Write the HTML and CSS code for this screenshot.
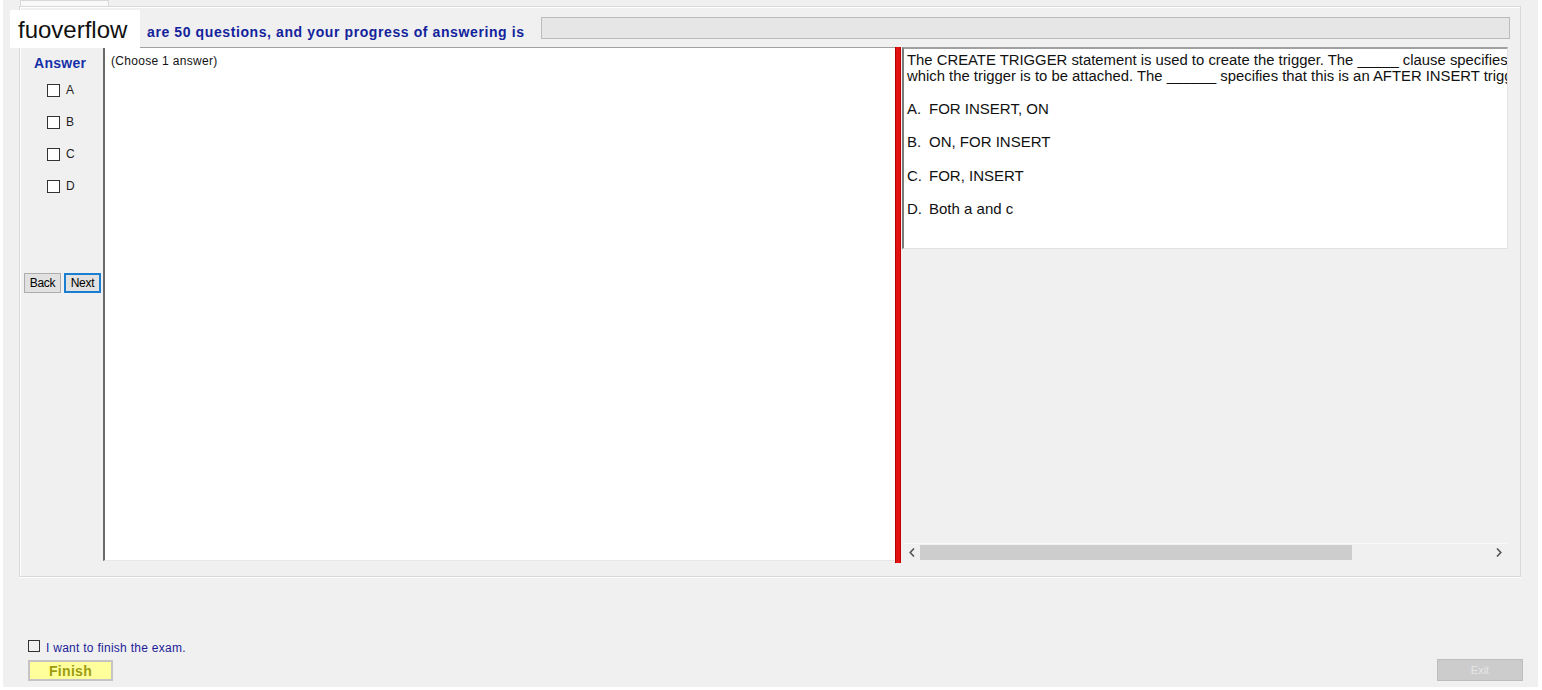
FILE: index.html
```html
<!DOCTYPE html>
<html>
<head>
<meta charset="utf-8">
<link rel="stylesheet" href="styles.css">
</head>
<body>
<div class="window">
  <div class="tabstrip"><div class="tab"></div></div>
  <div class="tabpage">
    <div class="header">
      <span class="header-text">are 50 questions, and your progress of answering is</span>
      <div class="progress"></div>
    </div>
    <div class="main">
      <div class="left">
        <div class="answer-title">Answer</div>
        <div class="choices">
          <div class="choice"><span class="box"></span><span class="lbl">A</span></div>
          <div class="choice"><span class="box"></span><span class="lbl">B</span></div>
          <div class="choice"><span class="box"></span><span class="lbl">C</span></div>
          <div class="choice"><span class="box"></span><span class="lbl">D</span></div>
        </div>
        <div class="nav">
          <button class="btn">Back</button>
          <button class="btn btn-focus">Next</button>
        </div>
      </div>
      <div class="middle">
        <div class="hint">(Choose 1 answer)</div>
      </div>
      <div class="splitter"></div>
      <div class="right">
        <div class="qbox">
          <div class="qline">The CREATE TRIGGER statement is used to create the trigger. The _____ clause specifies the table name on</div>
          <div class="qline">which the trigger is to be attached. The ______ specifies that this is an AFTER INSERT trigger.</div>
          <div class="opts">
            <div class="opt"><span class="key">A.</span>FOR INSERT, ON</div>
            <div class="opt"><span class="key">B.</span>ON, FOR INSERT</div>
            <div class="opt"><span class="key">C.</span>FOR, INSERT</div>
            <div class="opt"><span class="key">D.</span>Both a and c</div>
          </div>
        </div>
        <div class="filler"></div>
        <div class="hscroll">
          <div class="arrow"><svg width="6" height="9" viewBox="0 0 6 9"><path d="M5 0.5 L1.2 4.5 L5 8.5" fill="none" stroke="#555" stroke-width="1.6"/></svg></div>
          <div class="track"><div class="thumb"></div></div>
          <div class="arrow"><svg width="6" height="9" viewBox="0 0 6 9"><path d="M1 0.5 L4.8 4.5 L1 8.5" fill="none" stroke="#555" stroke-width="1.6"/></svg></div>
        </div>
      </div>
    </div>
  </div>
  <div class="footer">
    <div class="finish-group">
      <div class="confirm"><span class="box box-small"></span><span class="confirm-text">I want to finish the exam.</span></div>
      <button class="finish">Finish</button>
    </div>
    <button class="exit">Exit</button>
  </div>
  <div class="watermark">fuoverflow</div>
</div>
</body>
</html>
```
FILE: styles.css
```css
html, body {
  margin: 0;
  padding: 0;
  background: #ffffff;
  font-family: "Liberation Sans", Arial, sans-serif;
}

.window {
  position: relative;
  margin-left: 3px;
  width: 1535px;
  height: 687px;
  background: #f0f0f0;
  display: flex;
  flex-direction: column;
  overflow: hidden;
}

.tabstrip {
  height: 6px;
  padding-left: 17px;
  display: flex;
}

.tab {
  width: 89px;
  height: 6px;
  box-sizing: border-box;
  background: #f9f9f9;
  border: 1px solid #d9d9d9;
  border-bottom: none;
}

.tabpage {
  margin-left: 16px;
  width: 1502px;
  height: 571px;
  box-sizing: border-box;
  border: 1px solid #d9d9d9;
  box-shadow: inset 1px 1px 0 #ffffff, 0 1px 0 #ffffff;
  display: flex;
  flex-direction: column;
}

.header {
  height: 40px;
  display: flex;
  align-items: flex-start;
  padding-left: 127px;
  padding-right: 10px;
}

.header-text {
  padding-top: 17px;
  line-height: 16px;
  font-size: 14px;
  font-weight: bold;
  letter-spacing: 0.6px;
  color: #13239c;
  white-space: nowrap;
}

.progress {
  flex: 1;
  margin-left: 16px;
  margin-top: 10px;
  height: 22px;
  box-sizing: border-box;
  background: #e6e6e6;
  border: 1px solid #bcbcbc;
}

.main {
  margin-left: 2px;
  height: 516px;
  display: flex;
}

.left {
  width: 81px;
  display: flex;
  flex-direction: column;
}

.answer-title {
  padding-top: 9px;
  padding-left: 12px;
  line-height: 14px;
  font-size: 14px;
  font-weight: bold;
  letter-spacing: 0.3px;
  color: #1530a8;
}

.choices {
  margin-top: 4px;
  display: flex;
  flex-direction: column;
}

.choice {
  height: 32px;
  display: flex;
  align-items: center;
  padding-left: 25px;
}

.box {
  display: inline-block;
  width: 13px;
  height: 13px;
  box-sizing: border-box;
  border: 1px solid #333333;
  background: #ffffff;
}

.lbl {
  margin-left: 6px;
  font-size: 12px;
  color: #222222;
}

.nav {
  margin-top: 71px;
  padding-left: 2px;
  display: flex;
  gap: 3px;
}

.btn {
  width: 37px;
  height: 20px;
  box-sizing: border-box;
  padding: 0;
  background: #e1e1e1;
  border: 1px solid #adadad;
  font-family: "Liberation Sans", Arial, sans-serif;
  font-size: 12px;
  color: #000000;
  letter-spacing: -0.3px;
}

.btn-focus {
  border: 2px solid #1a7fd0;
}

.middle {
  width: 792px;
  height: 514px;
  box-sizing: border-box;
  background: #ffffff;
  border-left: 2px solid #6a6a6a;
  border-top: 1px solid #a0a0a0;
  border-bottom: 1px solid #e8e8e8;
}

.hint {
  padding-top: 6px;
  padding-left: 6px;
  line-height: 14px;
  font-size: 12px;
  color: #111111;
  letter-spacing: 0.3px;
}

.splitter {
  width: 6px;
  height: 516px;
  box-sizing: border-box;
  background: #e21212;
  border-left: 1px solid #b00000;
  border-right: 1px solid #c40000;
}

.right {
  width: 607px;
  height: 516px;
  display: flex;
  flex-direction: column;
}

.qbox {
  margin-left: 1px;
  height: 202px;
  box-sizing: border-box;
  background: #ffffff;
  border-top: 2px solid #a0a0a0;
  border-left: 2px solid #7a7a7a;
  border-right: 1px solid #e3e3e3;
  border-bottom: 1px solid #e3e3e3;
  padding: 3px 0 0 3px;
  overflow: hidden;
  color: #111111;
}

.qline {
  font-size: 14.85px;
  line-height: 16px;
  white-space: nowrap;
}

.opts {
  margin-top: 8px;
}

.opt {
  font-size: 15px;
  line-height: 33.4px;
  white-space: nowrap;
}

.key {
  display: inline-block;
  width: 22px;
}

.filler {
  flex: 1;
}

.hscroll {
  margin-left: 2px;
  margin-right: 1px;
  margin-bottom: 2px;
  height: 17px;
  display: flex;
  background: #f0f0f0;
  border-top: 1px solid #fafafa;
}

.arrow {
  width: 17px;
  display: flex;
  align-items: center;
  justify-content: center;
}

.track {
  flex: 1;
  display: flex;
  align-items: center;
}

.thumb {
  width: 432px;
  height: 15px;
  background: #cdcdcd;
}

.footer {
  margin-top: auto;
  padding: 0 15px 6px 25px;
  display: flex;
  justify-content: space-between;
  align-items: flex-end;
}

.finish-group {
  display: flex;
  flex-direction: column;
}

.confirm {
  height: 14px;
  margin-bottom: 7px;
  display: flex;
  align-items: center;
}

.box-small {
  width: 12px;
  height: 12px;
  background: transparent;
}

.confirm-text {
  margin-left: 6px;
  margin-top: 3px;
  font-size: 12px;
  color: #1c1c98;
  letter-spacing: 0.27px;
}

.finish {
  width: 85px;
  height: 21px;
  box-sizing: border-box;
  padding: 0;
  background: #ffff9c;
  border: 2px solid #c4c4c4;
  font-family: "Liberation Sans", Arial, sans-serif;
  font-size: 14px;
  font-weight: bold;
  letter-spacing: 0.3px;
  color: #9c9c10;
}

.exit {
  width: 86px;
  height: 22px;
  box-sizing: border-box;
  padding: 0;
  background: #cccccc;
  border: 1px solid #bdbdbd;
  font-family: "Liberation Sans", Arial, sans-serif;
  font-size: 11px;
  color: #e6e6e6;
}

.watermark {
  position: absolute;
  left: 7px;
  top: 10px;
  width: 130px;
  height: 38px;
  box-sizing: border-box;
  padding-left: 8px;
  background: #ffffff;
  font-size: 24px;
  line-height: 40px;
  color: #111111;
}
```
